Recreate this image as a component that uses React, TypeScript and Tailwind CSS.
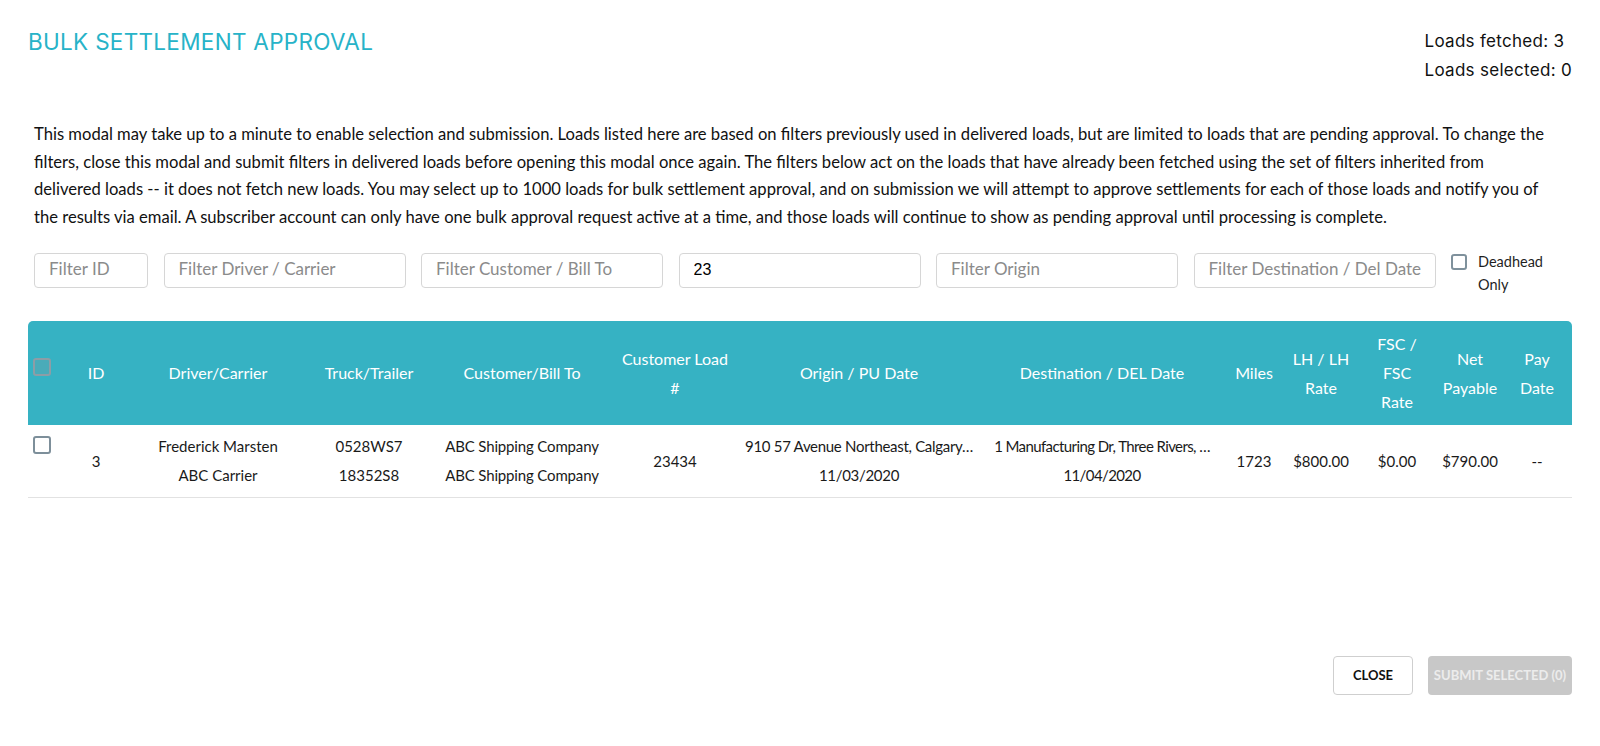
import React from "react";

type Col = { key: string; width: number; head: React.ReactNode };

const columns: Col[] = [
  { key: "cb", width: 36, head: null },
  { key: "id", width: 64, head: "ID" },
  { key: "driver", width: 180, head: "Driver/Carrier" },
  { key: "truck", width: 122, head: "Truck/Trailer" },
  { key: "customer", width: 184, head: "Customer/Bill To" },
  { key: "custload", width: 122, head: (<>Customer Load<br />#</>) },
  { key: "origin", width: 246, head: "Origin / PU Date" },
  { key: "dest", width: 240, head: "Destination / DEL Date" },
  { key: "miles", width: 64, head: "Miles" },
  { key: "lh", width: 70, head: (<>LH / LH<br />Rate</>) },
  { key: "fsc", width: 82, head: (<>FSC /<br />FSC<br />Rate</>) },
  { key: "net", width: 64, head: (<>Net<br />Payable</>) },
  { key: "pay", width: 70, head: (<>Pay<br />Date</>) },
];

function FilterInput({ placeholder, value, width }: { placeholder: string; value?: string; width: number }) {
  return (
    <input
      readOnly
      defaultValue={value}
      placeholder={placeholder}
      style={{ width }}
      className="h-[35px] shrink-0 rounded-[4px] border border-[#d6d6d6] bg-white px-[14px] font-['Liberation_Sans',sans-serif] text-[16px] text-black outline-none placeholder:font-['Lato',sans-serif] placeholder:text-[17px] placeholder:text-[#8b8b8b]"
    />
  );
}

export default function App() {
  return (
    <div className="min-h-[746px] bg-white px-7 pt-[27px] font-['Lato',sans-serif] text-[#1f1f1f]">
      {/* heading row */}
      <div className="flex items-start justify-between">
        <h1 className="font-['Inter',sans-serif] text-[22.5px] font-normal leading-[29px] tracking-[0.3px] text-[#27b3c8]">
          BULK SETTLEMENT APPROVAL
        </h1>
        <div className="font-['Inter',sans-serif] text-[17px] leading-[29px] tracking-[0.3px] text-[#111]">
          <div>Loads fetched: 3</div>
          <div>Loads selected: 0</div>
        </div>
      </div>

      {/* explanation */}
      <p className="mt-9 px-1.5 text-[16.6px] leading-[27.7px] text-[#111]">
        This modal may take up to a minute to enable selection and submission. Loads listed here are based on filters
        previously used in delivered loads, but are limited to loads that are pending approval. To change the filters,
        close this modal and submit filters in delivered loads before opening this modal once again. The filters below
        act on the loads that have already been fetched using the set of filters inherited from
        <br />
        delivered loads -- it does not fetch new loads. You may select up to 1000 loads for bulk settlement approval, and
        on submission we will attempt to approve settlements for each of those loads and notify you of the results via
        email. A subscriber account can only have one bulk approval request active at a time, and those loads will
        continue to show as pending approval until processing is complete.
      </p>

      {/* filters */}
      <div className="mt-[21px] flex h-[35px] items-start gap-[15.5px] px-1.5">
        <FilterInput placeholder="Filter ID" width={114} />
        <FilterInput placeholder="Filter Driver / Carrier" width={242} />
        <FilterInput placeholder="Filter Customer / Bill To" width={242} />
        <FilterInput placeholder="Filter Customer Load #" value="23" width={242} />
        <FilterInput placeholder="Filter Origin" width={242} />
        <FilterInput placeholder="Filter Destination / Del Date" width={242} />
        <label className="flex items-start gap-[11px]">
          <span className="mt-px block h-[16px] w-[16px] shrink-0 rounded-[3px] border-2 border-[#7f919c] bg-white" />
          <span className="-mt-[3px] block text-[14.5px] leading-[23px] text-[#1f1f1f]">
            Deadhead
            <br />
            Only
          </span>
        </label>
      </div>

      {/* loads table */}
      <div className="mt-[33px] overflow-hidden rounded-t-[5px]">
        <table className="w-full table-fixed border-collapse text-[15px]">
          <colgroup>
            {columns.map((c) => (
              <col key={c.key} style={{ width: c.width }} />
            ))}
          </colgroup>
          <thead>
            <tr className="h-[104px] bg-[#36b2c3] text-[16px] text-white">
              {columns.map((c) =>
                c.key === "cb" ? (
                  <th key={c.key} className="p-0 pl-[5px] pt-[37px] align-top">
                    <span className="block h-[18px] w-[18px] rounded-[3px] border-2 border-[#8d9da6] bg-[#4aabb9]" />
                  </th>
                ) : (
                  <th key={c.key} className="p-0 text-center align-middle font-normal leading-[29px]">
                    {c.head}
                  </th>
                )
              )}
            </tr>
          </thead>
          <tbody>
            <tr className="h-[73px] border-b border-[#e2e2e2] text-center leading-[29px] text-[#1a1a1a]">
              <td className="p-0 pl-[5px] pt-[11px] align-top">
                <span className="block h-[18px] w-[18px] rounded-[3px] border-2 border-[#7d8f9a] bg-white" />
              </td>
              <td className="p-0">3</td>
              <td className="p-0">
                Frederick Marsten
                <br />
                ABC Carrier
              </td>
              <td className="p-0">
                0528WS7
                <br />
                18352S8
              </td>
              <td className="p-0 tracking-[-0.15px]">
                ABC Shipping Company
                <br />
                ABC Shipping Company
              </td>
              <td className="p-0">23434</td>
              <td className="whitespace-nowrap p-0 tracking-[-0.3px]">
                910 57 Avenue Northeast, Calgary…
                <br />
                11/03/2020
              </td>
              <td className="whitespace-nowrap p-0 tracking-[-0.6px]">
                1 Manufacturing Dr, Three Rivers, …
                <br />
                11/04/2020
              </td>
              <td className="p-0">1723</td>
              <td className="p-0">$800.00</td>
              <td className="p-0">$0.00</td>
              <td className="p-0">$790.00</td>
              <td className="p-0">--</td>
            </tr>
          </tbody>
        </table>
      </div>

      {/* actions */}
      <div className="mt-[158px] flex justify-end gap-[15px]">
        <button className="h-[39px] w-[80px] rounded-[4px] border border-[#cfcfcf] bg-white text-[13px] font-bold text-[#111]">
          CLOSE
        </button>
        <button
          disabled
          className="h-[39px] w-[144px] rounded-[4px] bg-[#c8c8c8] text-[13px] font-bold text-[#ececec]"
        >
          SUBMIT SELECTED (0)
        </button>
      </div>
    </div>
  );
}
